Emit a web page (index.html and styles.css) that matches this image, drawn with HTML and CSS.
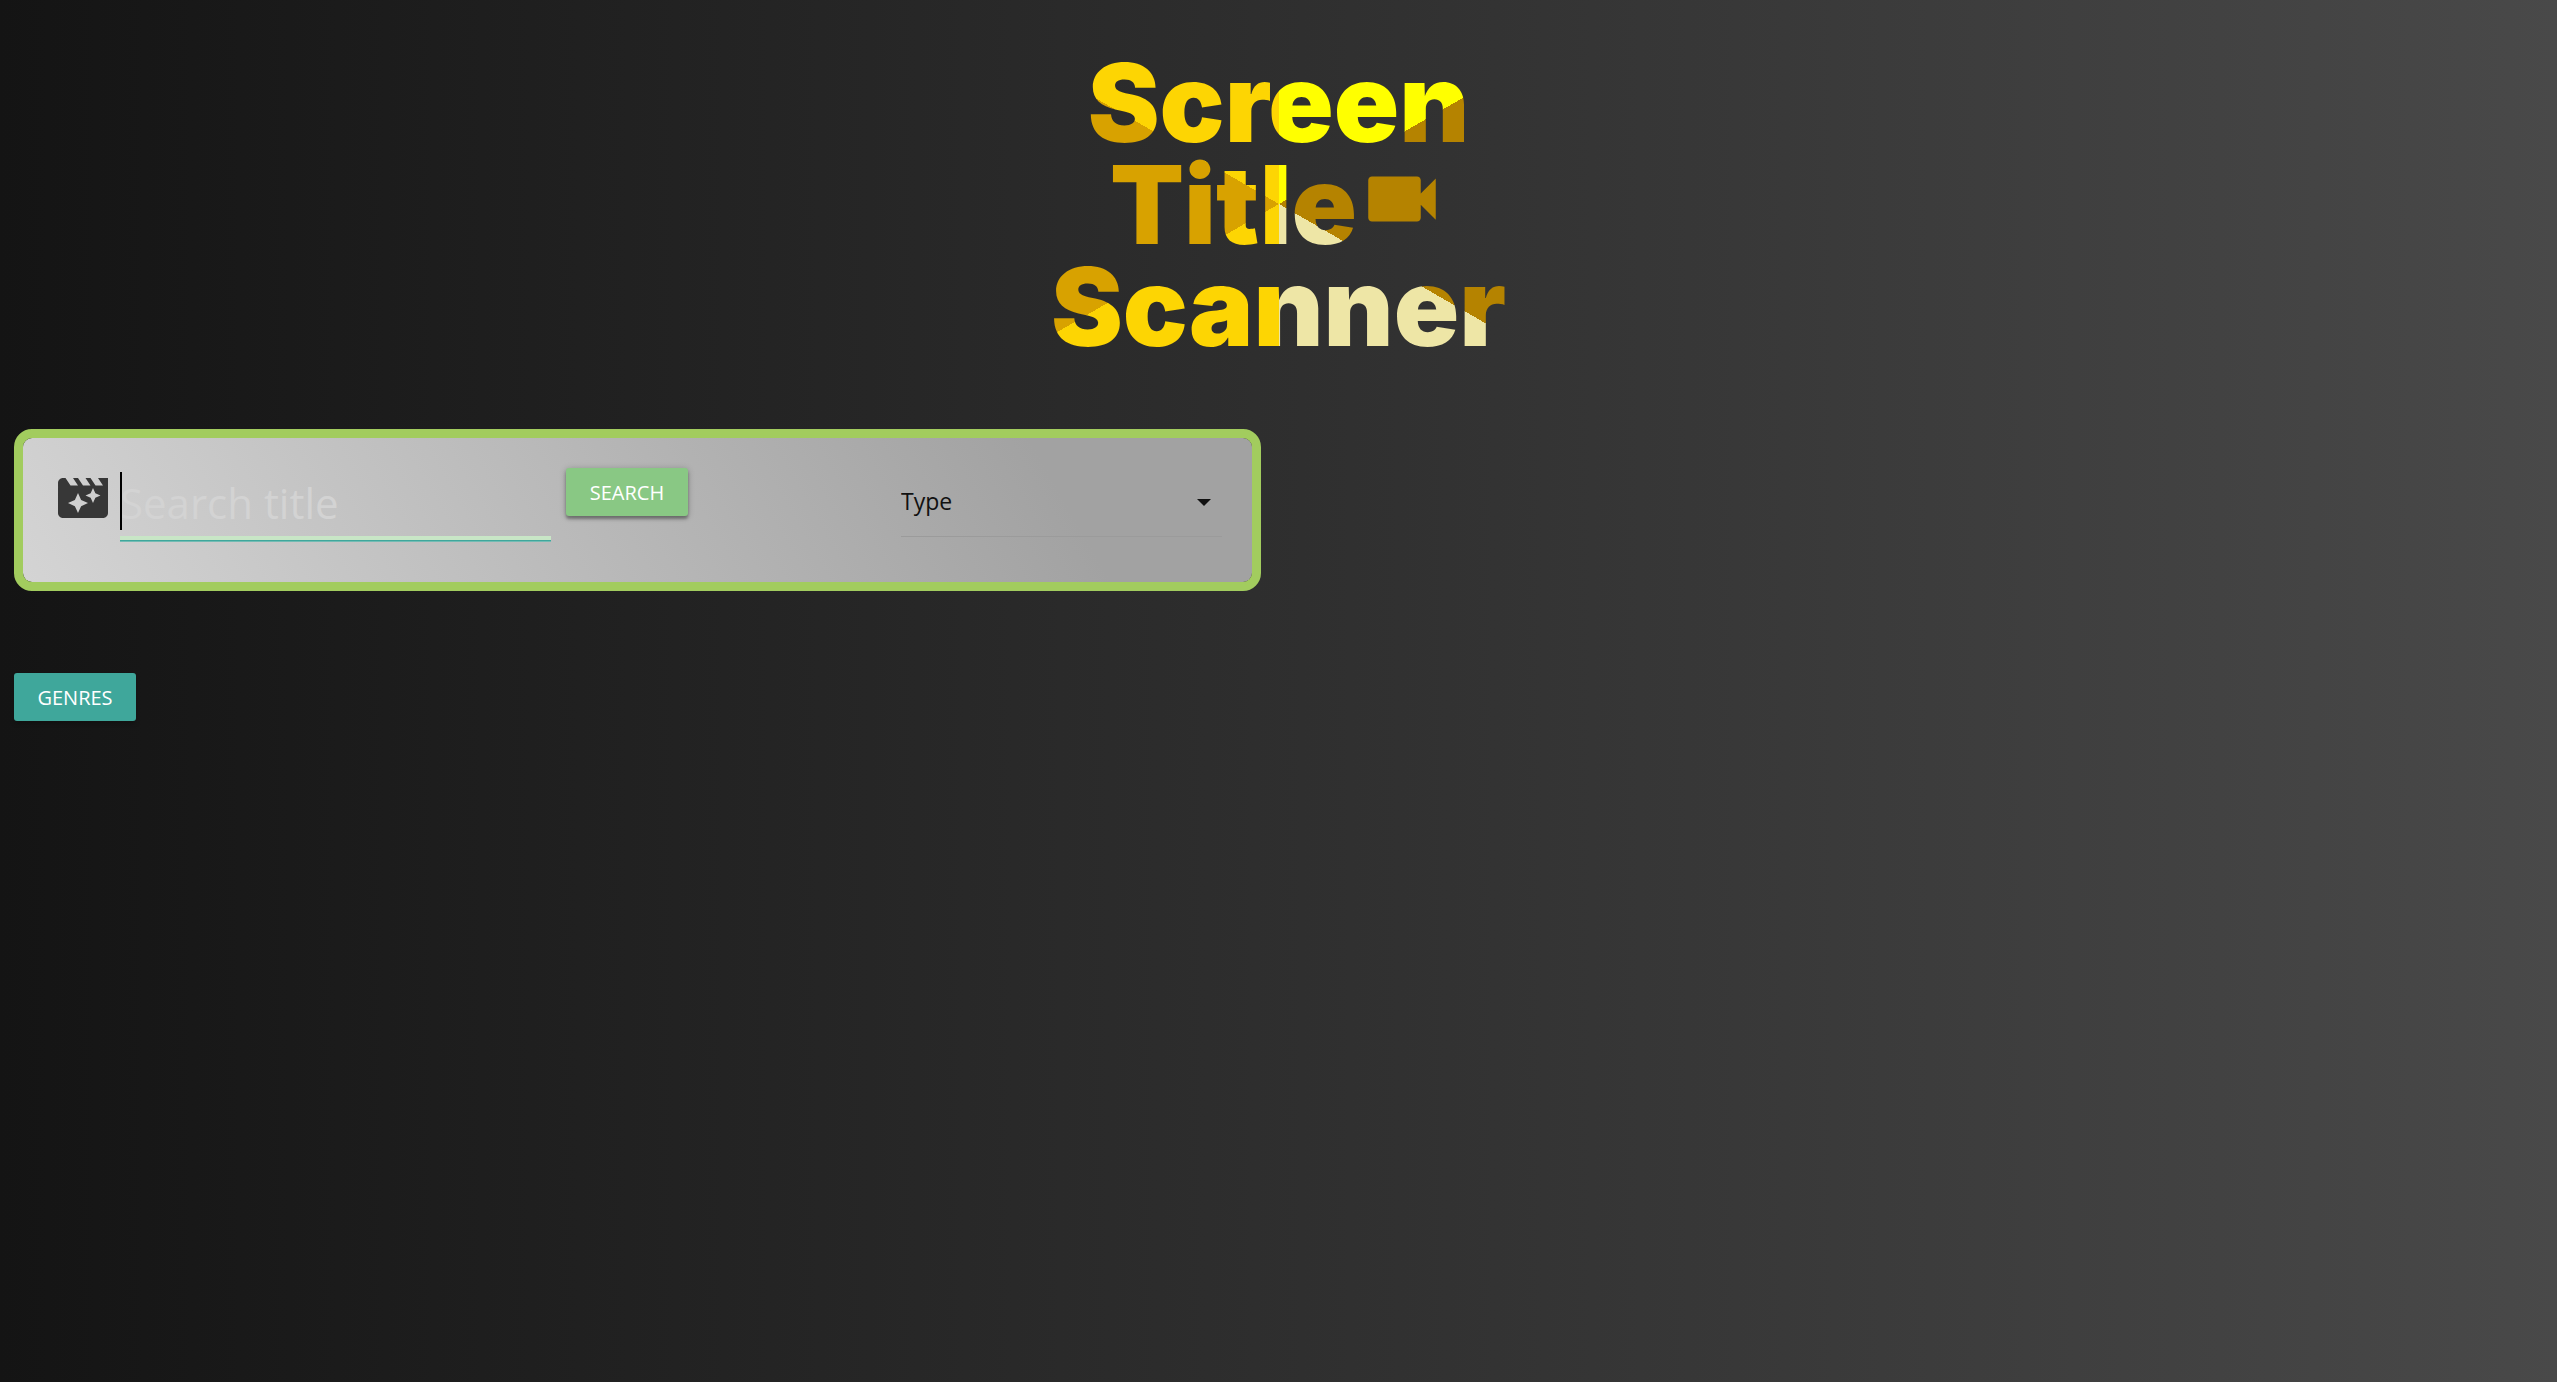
FILE: index.html
```html
<!DOCTYPE html>
<html lang="en">
<head>
<meta charset="utf-8">
<meta name="viewport" content="width=device-width, initial-scale=1">
<title>Screen Title Scanner</title>
<link rel="stylesheet" href="styles.css">
</head>
<body>
<header class="masthead">
  <h1 class="title">
    <span class="title-line">Screen</span>
    <span class="title-line">Title<svg class="title-icon" viewBox="0 0 24 24" aria-hidden="true"><path d="M17 10.5V7c0-.55-.45-1-1-1H4c-.55 0-1 .45-1 1v10c0 .55.45 1 1 1h12c.55 0 1-.45 1-1v-3.500l4 4v-11l-4 4z"/></svg></span>
    <span class="title-line">Scanner</span>
  </h1>
</header>
<main class="content">
  <form class="search-card">
    <svg class="search-icon" viewBox="0 0 24 24" aria-hidden="true"><path d="M18 4l2 3h-3l-2-3h-2l2 3h-3l-2-3H8l2 3H7L5 4H4c-1.100 0-1.990.9-1.990 2L2 18c0 1.100.9 2 2 2h16c1.100 0 2-.9 2-2V4h-4zm-6.750 11.250L10 18l-1.250-2.750L6 14l2.750-1.250L10 10l1.250 2.750L14 14l-2.750 1.250zm5.690-3.310L16 14l-.94-2.060L13 11l2.060-.94L16 8l.94 2.060L19 11l-2.060.94z"/></svg>
    <div class="search-field">
      <input class="search-input" type="text" placeholder="Search title" aria-label="Search title">
    </div>
    <button class="button button-search" type="submit">SEARCH</button>
    <div class="type-field">
      <select class="type-select" aria-label="Type"><option>Type</option></select>
      <svg class="type-arrow" viewBox="0 0 14 7" aria-hidden="true"><path d="M0 0h14L7 7z"/></svg>
    </div>
  </form>
  <button class="button button-genres" type="button">GENRES</button>
</main>
</body>
</html>
```
FILE: styles.css
```css
* { box-sizing: border-box; }

body {
  min-height: 100vh;
  margin: 0;
  padding: 52px 14px 0;
  background: linear-gradient(to right, #141414, #494949);
  font-family: "Open Sans", "Noto Sans", sans-serif;
}

.masthead {
  display: flex;
  justify-content: center;
  height: 377px;
}

.title {
  display: flex;
  flex-direction: column;
  align-items: center;
  width: 600px;
  height: 304px;
  margin: 0;
  background: conic-gradient(#ff0 0 60deg, #b58300 60deg 120deg, #eee6a6 120deg 180deg, #fdd503 180deg 240deg, #d8a200 240deg 300deg, #fdd503 300deg);
  background-clip: text;
  -webkit-background-clip: text;
  color: transparent;
  font: 900 108px/102px Inter, sans-serif;
}

.title-line {
  display: flex;
  align-items: center;
  height: 102px;
}

.title-icon {
  width: 90px;
  height: 90px;
  margin-bottom: 12px;
  fill: #b58300;
}

.content {
  display: grid;
  grid-template-columns: 1fr 1fr;
  column-gap: 35px;
  row-gap: 82px;
  justify-items: start;
}

.search-card {
  display: flex;
  align-items: flex-start;
  width: 100%;
  height: 162px;
  padding: 30px;
  border: 9px solid #a2cc5e;
  border-radius: 18px;
  background: linear-gradient(60deg, #d4d4d4, #a2a2a2 83%) padding-box;
}

.search-icon {
  width: 60px;
  height: 60px;
  fill: #373737;
}

.search-field {
  position: relative;
  flex: 0 1 431px;
  margin: 0 15px 0 7px;
}

/* text cursor at the start of the focused field */
.search-field::before {
  content: "";
  position: absolute;
  top: 4px;
  left: 0;
  width: 2px;
  height: 58px;
  background: #000;
}

.search-input {
  display: block;
  width: 100%;
  height: 72px;
  padding: 0;
  border: 0;
  border-bottom: 4px solid #c8e6c6;
  outline: 0;
  background: none;
  box-shadow: 0 1px #3fa79c, 0 2px #73bbb3;
  font: 42px "Open Sans", "Noto Sans", sans-serif;
}

.search-input::placeholder { color: #d3d3d3; opacity: 1; }

.button {
  width: 122px;
  height: 48px;
  padding: 0;
  border: 0;
  border-radius: 3px;
  color: #fff;
  font: 20px "Open Sans", "Noto Sans", sans-serif;
}

.button-search {
  background: #89c884;
  box-shadow: 0 3px 3px rgba(0, 0, 0, .3), 0 1px 6px rgba(0, 0, 0, .25);
}

.button-genres {
  grid-column: 1;
  background: #3fa79b;
  box-shadow: 0 3px 4px rgba(0, 0, 0, .2);
}

.type-field {
  position: relative;
  flex: 0 1 321px;
  margin-left: auto;
}

.type-select {
  display: block;
  width: 100%;
  height: 69px;
  padding: 0 0 2px;
  border: 0;
  border-bottom: 1px solid #9b9b9b;
  border-radius: 0;
  appearance: none;
  background: none;
  color: #111;
  font: 23px "Open Sans", "Noto Sans", sans-serif;
}

.type-arrow {
  position: absolute;
  top: 31px;
  right: 11px;
  width: 14px;
  height: 7px;
  fill: #111;
  pointer-events: none;
}
```
